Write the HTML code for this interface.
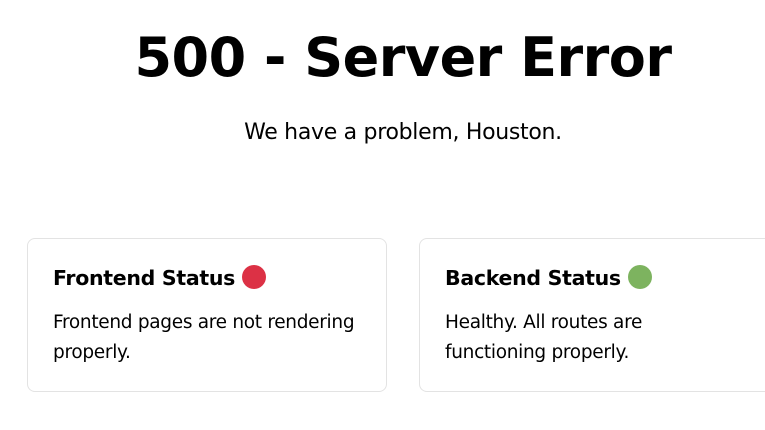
<!DOCTYPE html>
<html><head><meta charset="utf-8"><style>
html,body{margin:0;padding:0;width:765px;height:430px;overflow:hidden;background:#fff;font-family:"DejaVu Sans","Liberation Sans",sans-serif;color:#000}
h1{position:absolute;left:0;width:806px;top:20px;margin:0;text-align:center;font-size:54px;font-weight:bold;line-height:76px;letter-spacing:-0.5px}
.sub{position:absolute;left:0;width:806px;top:118px;text-align:center;font-size:22px;line-height:30px;letter-spacing:-0.3px}
.card{position:absolute;top:238px;width:360px;height:154px;border:1px solid #e3e3e3;border-radius:8px;box-sizing:border-box}
.t{position:absolute;left:25px;top:25px;font-size:20.5px;font-weight:bold;line-height:28px;white-space:nowrap;letter-spacing:-0.3px}
.dot{display:inline-block;width:24px;height:24px;border-radius:50%;vertical-align:-4px;margin-left:0}
.b{position:absolute;left:25px;top:69px;font-size:18.5px;line-height:30px;width:330px;letter-spacing:-0.3px}
</style></head><body>
<h1>500 - Server Error</h1>
<div class="sub">We have a problem, Houston.</div>
<div class="card" style="left:27px"><div class="t">Frontend Status <span class="dot" style="background:#dc3145"></span></div><div class="b">Frontend pages are not rendering<br>properly.</div></div>
<div class="card" style="left:419px;width:380px"><div class="t">Backend Status <span class="dot" style="background:#7db35f"></span></div><div class="b">Healthy. All routes are<br>functioning properly.</div></div>
</body></html>
